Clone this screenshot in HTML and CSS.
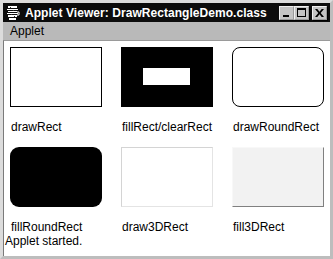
FILE: index.html
```html
<!DOCTYPE html>
<html lang="en">
<head>
    <meta charset="UTF-8">
    <title>Applet Viewer: DrawRectangleDemo.class</title>
    <link rel="stylesheet" href="styles.css">
</head>
<body>
    <div class="window">
        <div class="titlebar">
            <svg class="app-icon" width="16" height="16" viewBox="0 0 16 16">
                <path d="M3 1h9v2H3z M2 4h11v1H2z M3 6h9v1H3z M2 8h11v1H2z M3 10h9v2H3z M4 13h7v2H4z" fill="#fff"/>
                <path d="M12 7h2v3h-2" fill="none" stroke="#fff" stroke-width="1"/>
                <path d="M5 2h1v1H5z M8 5h1v1H8z M6 9h1v1H6z M9 11h1v1H9z" fill="#333"/>
            </svg>
            <span class="title">Applet Viewer: DrawRectangleDemo.class</span>
            <div class="win-buttons">
                <span class="win-btn"><i class="min"></i></span>
                <span class="win-btn"><i class="max"></i></span>
                <span class="win-btn close">
                    <svg width="9" height="8" viewBox="0 0 9 8"><path d="M0 0h2.3l2.2 2.7L6.7 0H9L5.7 4 9 8H6.7L4.5 5.3 2.3 8H0l3.3-4z" fill="#000"/></svg>
                </span>
            </div>
        </div>
        <div class="menubar">
            <span class="menu-item">Applet</span>
        </div>
        <div class="content">
            <div class="grid">
                <div class="cell">
                    <div class="shape draw-rect"></div>
                    <div class="label">drawRect</div>
                </div>
                <div class="cell">
                    <div class="shape fill-rect"><div class="clear-rect"></div></div>
                    <div class="label">fillRect/clearRect</div>
                </div>
                <div class="cell">
                    <div class="shape draw-round"></div>
                    <div class="label">drawRoundRect</div>
                </div>
                <div class="cell">
                    <div class="shape fill-round"></div>
                    <div class="label">fillRoundRect</div>
                </div>
                <div class="cell">
                    <div class="shape draw-3d"></div>
                    <div class="label">draw3DRect</div>
                </div>
                <div class="cell">
                    <div class="shape fill-3d"></div>
                    <div class="label">fill3DRect</div>
                </div>
            </div>
            <div class="status">Applet started.</div>
        </div>
    </div>
</body>
</html>
```

FILE: styles.css
```css
* {
    margin: 0;
    padding: 0;
    box-sizing: border-box;
}
body {
    background: #c0c0c0;
    font-family: 'Liberation Sans', Arial, sans-serif;
    font-size: 12px;
    color: #000;
}
.window {
    width: 333px;
    height: 259px;
    background: #bdbdbd;
    border: 3px solid #bdbdbd;
    border-top-color: #dcdcdc;
    border-left-color: #dcdcdc;
    box-shadow: inset -1px -1px 0 #6a6a6a;
    display: flex;
    flex-direction: column;
}
.titlebar {
    height: 19px;
    background: #0c0c0c;
    display: flex;
    align-items: center;
    padding-left: 2px;
}
.app-icon {
    margin-right: 4px;
    flex: none;
}
.title {
    color: #fff;
    font-weight: bold;
    font-size: 12px;
    letter-spacing: 0.05px;
    white-space: nowrap;
    flex: 1;
    min-width: 0;
}
.win-buttons {
    display: flex;
    align-items: center;
    padding-right: 3px;
    flex: none;
}
.win-btn {
    width: 15px;
    height: 14px;
    background: #c4c4c4;
    border: 1px solid #9a9a9a;
    border-top-color: #f0f0f0;
    border-left-color: #f0f0f0;
    box-shadow: 1px 1px 0 #000;
    display: flex;
    align-items: center;
    justify-content: center;
}
.win-btn.close {
    margin-left: 3px;
}
.min {
    width: 6px;
    height: 2px;
    background: #000;
    margin-top: 7px;
    margin-right: 2px;
}
.max {
    width: 9px;
    height: 9px;
    border: 1px solid #000;
    border-top-width: 2px;
}
.menubar {
    height: 18px;
    background: #b9b9b9;
    display: flex;
    align-items: center;
    padding-left: 7px;
}
.content {
    flex: 1;
    background: #fff;
    border-left: 1px solid #7a7a7a;
    border-top: 1px solid #9a9a9a;
    padding: 6px 0 0 1px;
}
.grid {
    display: grid;
    grid-template-columns: repeat(3, 92px);
    column-gap: 19px;
    row-gap: 13px;
    padding-left: 5px;
}
.shape {
    width: 92px;
    height: 60px;
}
.label {
    margin-top: 13px;
    height: 14px;
    line-height: 14px;
    padding-left: 1px;
}
.draw-rect {
    border: 1px solid #000;
}
.fill-rect {
    background: #000;
    padding: 21px 0 0 22px;
}
.clear-rect {
    width: 47px;
    height: 17px;
    background: #fff;
}
.draw-round {
    border: 1px solid #000;
    border-radius: 8px;
}
.fill-round {
    background: #000;
    border-radius: 9px;
}
.draw-3d {
    border: 1px solid #d4d4d4;
    border-right-color: #e4e4e4;
    border-bottom-color: #e4e4e4;
}
.fill-3d {
    background: #f2f2f2;
    border: 1px solid #f8f8f8;
    border-right-color: #808080;
    border-bottom-color: #808080;
}
.status {
    line-height: 14px;
}
```
